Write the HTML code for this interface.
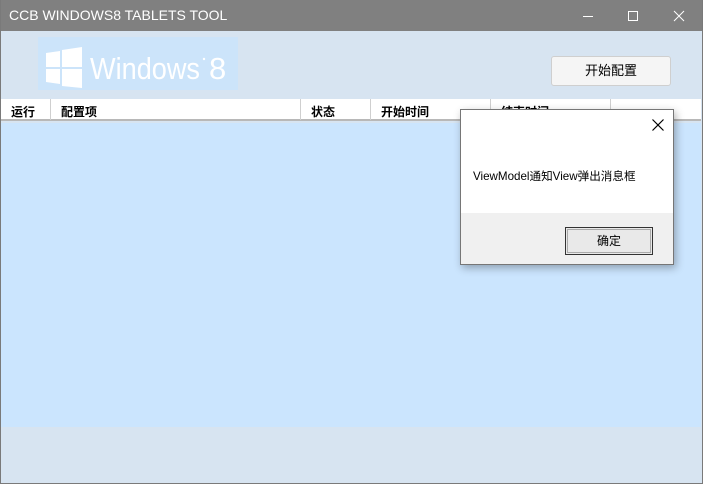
<!DOCTYPE html>
<html><head><meta charset="utf-8"><style>
*{margin:0;padding:0;box-sizing:border-box}
body{width:703px;height:484px;overflow:hidden;background:#d7e4f1;font-family:"Liberation Sans","Noto Sans CJK SC",sans-serif;position:relative}
.win{position:absolute;left:0;top:0;width:703px;height:484px;border:1px solid #7a7a7a;border-top:none}
.title{position:absolute;left:0;top:0;width:703px;height:31px;background:#808080;color:#fff;font-size:14px;line-height:31px;padding-left:9px}
.logo{position:absolute;left:38px;top:37px;width:200px;height:53px;background:#cce4fa}
.hdr{position:absolute;left:1px;top:99px;width:700px;height:22px;background:#fff;border-bottom:2px solid #b8b8b8;font-size:12px;font-weight:bold;color:#000}
.hdr span{position:absolute;top:4px}
.hdr i{position:absolute;top:0;width:1px;height:21px;background:#cfcfcf}
.grid{position:absolute;left:1px;top:123px;width:700px;height:304px;background:#cbe5fe}
.btn{position:absolute;left:551px;top:56px;width:120px;height:30px;border:1px solid #cfcfcf;border-radius:3px;background:#f5f5f5;font-size:13px;text-align:center;line-height:28px}
.dlg{position:absolute;left:460px;top:109px;width:214px;height:156px;background:#fff;border:1px solid #767676;box-shadow:2px 3px 8px rgba(0,0,0,.3)}
.foot{position:absolute;left:0;top:103px;width:212px;height:51px;background:#f0f0f0}
.ok{position:absolute;left:104px;top:14px;width:88px;height:28px;border:1px solid #333;outline:1px solid #aaa;outline-offset:-3px;background:#e9e9e9;font-size:12px;text-align:center;line-height:26px}
</style></head><body>
<div class="title">CCB WINDOWS8 TABLETS TOOL</div>
<svg style="position:absolute;left:580px;top:8px" width="110" height="16"><line x1="3" y1="8.5" x2="13" y2="8.5" stroke="#fff"/><rect x="48.5" y="3.5" width="9" height="9" fill="none" stroke="#fff"/><path d="M94 3 L104 13 M104 3 L94 13" stroke="#fff"/></svg>
<div class="logo">
<svg width="200" height="53"><g fill="#fff"><path d="M8 16 L22 14 L22 30 L8 30Z M24 13 L44 10 L44 30 L24 30Z M8 32 L22 32 L22 47 L8 45Z M24 32 L44 32 L44 51 L24 49Z"/></g><text x="52" y="42" font-family="Liberation Sans" font-size="31" fill="#fff" textLength="110" lengthAdjust="spacingAndGlyphs">Windows</text><circle cx="166" cy="22" r="1.2" fill="#fff"/><text x="171" y="42" font-family="Liberation Sans" font-size="31" fill="#fff">8</text></svg>
</div>
<div class="btn">开始配置</div>
<div class="hdr"><span style="left:10px">运行</span><i style="left:49px"></i><span style="left:60px">配置项</span><i style="left:299px"></i><span style="left:310px">状态</span><i style="left:369px"></i><span style="left:380px">开始时间</span><i style="left:489px"></i><span style="left:500px">结束时间</span><i style="left:609px"></i></div>
<div class="grid"></div>
<div class="win"></div>
<div class="dlg">
<svg style="position:absolute;left:190px;top:8px" width="14" height="14"><path d="M1.5 1.5 L12.5 12.5 M12.5 1.5 L1.5 12.5" stroke="#000" stroke-width="1.2"/></svg>
<div style="position:absolute;left:12px;top:58px;font-size:11.6px">ViewModel通知View弹出消息框</div>
<div class="foot"><div class="ok">确定</div></div>
</div>
</body></html>
